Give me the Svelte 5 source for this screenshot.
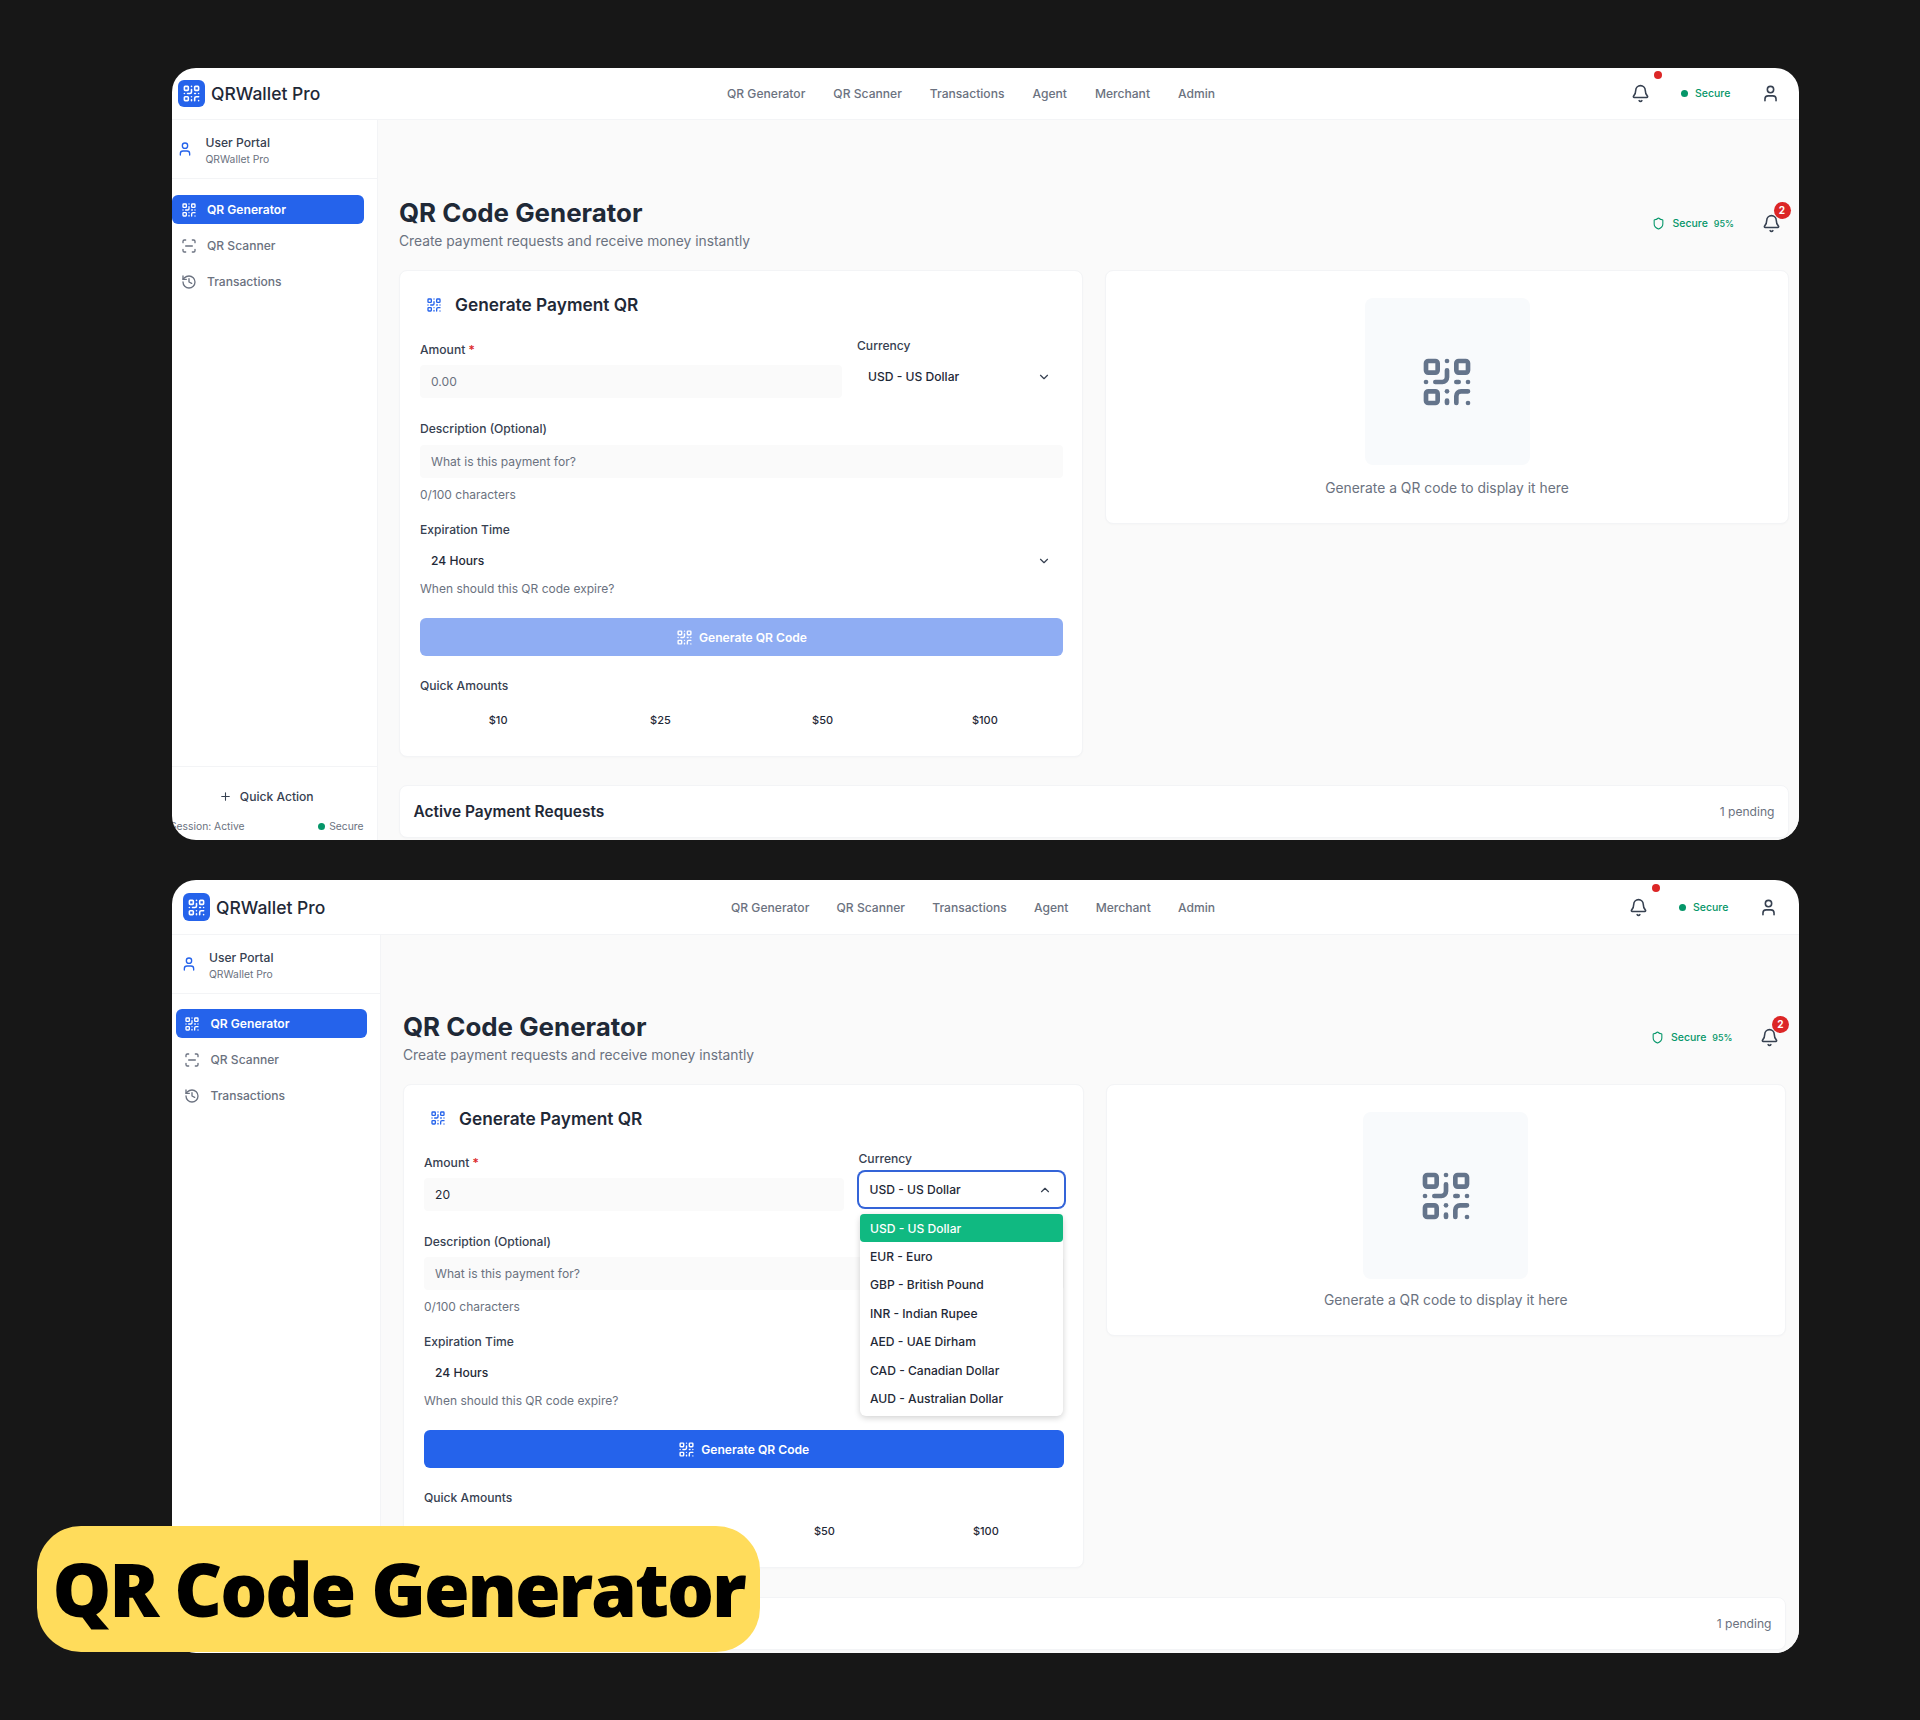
<script>
	const navLinks = ['QR Generator', 'QR Scanner', 'Transactions', 'Agent', 'Merchant', 'Admin'];
	const currencies = [
		'USD - US Dollar',
		'EUR - Euro',
		'GBP - British Pound',
		'INR - Indian Rupee',
		'AED - UAE Dirham',
		'CAD - Canadian Dollar',
		'AUD - Australian Dollar'
	];
	const quickAmounts = ['$10', '$25', '$50', '$100'];
</script>

{#snippet qr(size)}
	<svg class="ic" width={size} height={size} viewBox="0 0 24 24">
		<rect width="5" height="5" x="3" y="3" rx="1" />
		<rect width="5" height="5" x="16" y="3" rx="1" />
		<rect width="5" height="5" x="3" y="16" rx="1" />
		<path d="M21 16h-3a2 2 0 0 0-2 2v3" />
		<path d="M21 21v.01" />
		<path d="M12 7v3a2 2 0 0 1-2 2H7" />
		<path d="M3 12h.01" />
		<path d="M12 3h.01" />
		<path d="M12 16v.01" />
		<path d="M16 12h1" />
		<path d="M21 12v.01" />
		<path d="M12 21v-1" />
	</svg>
{/snippet}

{#snippet bell(size)}
	<svg class="ic" width={size} height={size} viewBox="0 0 24 24">
		<path d="M10.268 21a2 2 0 0 0 3.464 0" />
		<path d="M3.262 15.326A1 1 0 0 0 4 17h16a1 1 0 0 0 .74-1.673C19.41 13.956 18 12.499 18 8A6 6 0 0 0 6 8c0 4.499-1.411 5.956-2.738 7.326" />
	</svg>
{/snippet}

{#snippet user(size)}
	<svg class="ic" width={size} height={size} viewBox="0 0 24 24">
		<path d="M19 21v-2a4 4 0 0 0-4-4H9a4 4 0 0 0-4 4v2" />
		<circle cx="12" cy="7" r="4" />
	</svg>
{/snippet}

{#snippet chevron(up)}
	<svg class="ic chev" width="14" height="14" viewBox="0 0 24 24">
		<path d={up ? 'm18 15-6-6-6 6' : 'm6 9 6 6 6-6'} />
	</svg>
{/snippet}

{#snippet screen(open)}
	<div class="screen" class:s1={!open} class:s2={open}>
		<header class="topbar">
			<div class="brand">
				<span class="logo">{@render qr(19)}</span>
				<span class="brand-name">QRWallet Pro</span>
			</div>
			<nav class="topnav">
				{#each navLinks as link}
					<span>{link}</span>
				{/each}
			</nav>
			<div class="top-right">
				<span class="bell">
					{@render bell(19)}
					<i class="red-dot"></i>
				</span>
				<span class="secure"><i class="dot"></i>Secure</span>
				{@render user(19)}
			</div>
		</header>

		<div class="body">
			<aside class="sidebar">
				<div class="portal">
					<span class="portal-ic">{@render user(16)}</span>
					<div>
						<div class="portal-name">User Portal</div>
						<div class="portal-sub">QRWallet Pro</div>
					</div>
				</div>
				<div class="side-nav">
					<div class="side-item active">{@render qr(16)}QR Generator</div>
					<div class="side-item">
						<svg class="ic" width="16" height="16" viewBox="0 0 24 24">
							<path d="M3 7V5a2 2 0 0 1 2-2h2" />
							<path d="M17 3h2a2 2 0 0 1 2 2v2" />
							<path d="M21 17v2a2 2 0 0 1-2 2h-2" />
							<path d="M7 21H5a2 2 0 0 1-2-2v-2" />
							<path d="M7 12h10" />
						</svg>
						QR Scanner
					</div>
					<div class="side-item">
						<svg class="ic" width="16" height="16" viewBox="0 0 24 24">
							<path d="M3 12a9 9 0 1 0 9-9 9.75 9.75 0 0 0-6.74 2.74L3 8" />
							<path d="M3 3v5h5" />
							<path d="M12 7v5l4 2" />
						</svg>
						Transactions
					</div>
				</div>
				<div class="side-foot">
					<div class="quick-action">
						<svg class="ic" width="13" height="13" viewBox="0 0 24 24">
							<path d="M5 12h14" />
							<path d="M12 5v14" />
						</svg>
						Quick Action
					</div>
					<div class="session">
						<span class="sess-label">Session: Active</span>
						<span class="sess-secure"><i class="dot"></i>Secure</span>
					</div>
				</div>
			</aside>

			<main class="main">
				<div class="page-head">
					<div>
						<h1>QR Code Generator</h1>
						<p>Create payment requests and receive money instantly</p>
					</div>
					<div class="page-status">
						<span class="shield">
							<svg class="ic" width="13" height="13" viewBox="0 0 24 24">
								<path d="M20 13c0 5-3.5 7.5-7.66 8.95a1 1 0 0 1-.67-.01C7.5 20.5 4 18 4 13V6a1 1 0 0 1 1-1c2 0 4.5-1.2 6.24-2.72a1.17 1.17 0 0 1 1.52 0C14.51 3.81 17 5 19 5a1 1 0 0 1 1 1z" />
							</svg>
							<span>Secure</span>
							<span class="pct">95%</span>
						</span>
						<span class="bell page-bell">
							{@render bell(19)}
							<b class="badge">2</b>
						</span>
					</div>
				</div>

				<div class="columns">
					<section class="card form-card">
						<h2>
							<span class="h2-ic">{@render qr(16)}</span>
							Generate Payment QR
						</h2>
						<div class="row">
							<div class="amount-col">
								<div class="label">Amount <em>*</em></div>
								<div class="input" class:filled={open}>{open ? '20' : '0.00'}</div>
							</div>
							<div class="currency-col">
								<div class="label">Currency</div>
								<div class="select currency" class:focus={open}>
									USD - US Dollar
									{@render chevron(open)}
								</div>
								{#if open}
									<ul class="dropdown">
										{#each currencies as c, i}
											<li class:picked={i === 0}>{c}</li>
										{/each}
									</ul>
								{/if}
							</div>
						</div>
						<div class="label desc-label">Description (Optional)</div>
						<div class="input desc">What is this payment for?</div>
						<div class="help count">0/100 characters</div>
						<div class="label exp-label">Expiration Time</div>
						<div class="select expiry">
							24 Hours
							{@render chevron(false)}
						</div>
						<div class="help when">When should this QR code expire?</div>
						<div class="generate" class:ready={open}>
							{@render qr(17)}
							Generate QR Code
						</div>
						<div class="label quick-label">Quick Amounts</div>
						<div class="amounts">
							{#each quickAmounts as amount}
								<span>{amount}</span>
							{/each}
						</div>
					</section>

					<section class="card preview-card">
						<div class="placeholder">{@render qr(56)}</div>
						<p>Generate a QR code to display it here</p>
					</section>
				</div>

				<section class="card active-card">
					<h3>Active Payment Requests</h3>
					<span>1 pending</span>
				</section>
			</main>
		</div>
	</div>
{/snippet}

<div class="page">
	{@render screen(false)}
	{@render screen(true)}
	<div class="caption">QR Code Generator</div>
</div>

<style>
	:global(body) {
		margin: 0;
		background: #171717;
	}

	.page {
		position: relative;
		height: 1720px;
		padding: 68px 121px 0 172px;
		box-sizing: border-box;
		display: flex;
		flex-direction: column;
		gap: 40px;
		background: #171717;
		font-family: Inter, 'Liberation Sans', sans-serif;
		color: #1f2937;
		overflow: hidden;
	}

	.caption {
		position: absolute;
		left: 37px;
		top: 1526px;
		width: 723px;
		height: 126px;
		border-radius: 44px;
		background: #ffdc5b;
		color: #000;
		font-family: 'Open Sans', sans-serif;
		font-weight: 800;
		font-size: 74px;
		letter-spacing: -2.15px;
		line-height: 126px;
		text-align: center;
		white-space: nowrap;
	}

	.screen {
		flex: none;
		height: 772px;
		border-radius: 24px;
		overflow: hidden;
		background: #fff;
		display: flex;
		flex-direction: column;
		--sl: 0px;
	}
	.s2 {
		height: 773px;
		--sl: 3.5px;
	}

	.ic {
		fill: none;
		stroke: currentColor;
		stroke-width: 2;
		stroke-linecap: round;
		stroke-linejoin: round;
		flex: none;
		display: block;
	}
	i {
		display: block;
	}

	/* top bar */
	.topbar {
		flex: none;
		height: 52px;
		box-sizing: border-box;
		border-bottom: 1px solid #f3f4f6;
		display: flex;
		align-items: center;
		padding: 0 19px 0 5.5px;
	}
	.s2 .topbar {
		height: 55px;
		padding-left: 10.5px;
		padding-right: 21px;
	}
	.brand {
		display: flex;
		align-items: center;
		gap: 6px;
		width: 142px;
	}
	.logo {
		flex: none;
		width: 27.5px;
		height: 27.5px;
		border-radius: 6px;
		background: #2563eb;
		color: #fff;
		display: flex;
		align-items: center;
		justify-content: center;
	}
	.brand-name {
		font-size: 17.5px;
		font-weight: 500;
		color: #1f2937;
		white-space: nowrap;
	}
	.topnav {
		margin-left: 407.5px;
		display: flex;
		gap: 28px;
		font-size: 12.1px;
		font-weight: 500;
		color: #6b7280;
	}
	.s2 .topnav {
		margin-left: 406.5px;
		gap: 27.2px;
	}
	.top-right {
		margin-left: auto;
		display: flex;
		align-items: center;
	}
	.bell {
		display: block;
		position: relative;
		color: #374151;
	}
	.red-dot {
		position: absolute;
		right: -12.5px;
		top: -13.5px;
		width: 8px;
		height: 8px;
		border-radius: 50%;
		background: #dc2626;
	}
	.secure {
		margin-left: 31.5px;
		width: 68px;
		display: flex;
		align-items: center;
		gap: 7px;
		font-size: 10.5px;
		font-weight: 500;
		color: #059669;
	}
	.dot {
		width: 7px;
		height: 7px;
		border-radius: 50%;
		background: #059669;
		flex: none;
	}
	.top-right > :global(svg) {
		margin-left: 12px;
		color: #374151;
	}

	.body {
		flex: 1;
		display: flex;
		min-height: 0;
	}

	/* sidebar */
	.sidebar {
		flex: none;
		width: 205.5px;
		box-sizing: border-box;
		border-right: 1px solid #f3f4f6;
		display: flex;
		flex-direction: column;
		padding-left: var(--sl);
	}
	.s2 .sidebar {
		width: 209px;
	}
	.portal {
		height: 59px;
		flex: none;
		box-sizing: border-box;
		border-bottom: 1px solid #f3f4f6;
		display: flex;
		align-items: center;
		gap: 12.5px;
		padding-top: 2px;
		margin-left: calc(0px - var(--sl));
		padding-left: calc(5px + var(--sl));
	}
	.portal-ic {
		color: #2563eb;
		margin-top: -2px;
	}
	.portal-name {
		font-size: 12.1px;
		line-height: 16px;
		font-weight: 500;
		color: #374151;
	}
	.portal-sub {
		font-size: 10.3px;
		line-height: 14px;
		color: #6b7280;
		margin-top: 1px;
	}
	.side-nav {
		padding-top: 16px;
		display: flex;
		flex-direction: column;
		gap: 7px;
		width: 191.5px;
	}
	.s2 .side-nav {
		padding-top: 15px;
	}
	.side-item {
		height: 29px;
		box-sizing: border-box;
		display: flex;
		align-items: center;
		gap: 10.5px;
		padding-left: 8.5px;
		border-radius: 6px;
		font-size: 12.1px;
		font-weight: 500;
		color: #6b7280;
	}
	.side-item.active {
		background: #2563eb;
		color: #fff;
		font-weight: 600;
	}
	.side-foot {
		margin-top: auto;
		border-top: 1px solid #f3f4f6;
		margin-left: calc(0px - var(--sl));
		padding: 21px 13px 7px 0;
	}
	.quick-action {
		display: flex;
		align-items: center;
		justify-content: center;
		gap: 8px;
		height: 16px;
		margin-right: 3px;
		font-size: 12.1px;
		font-weight: 500;
		color: #374151;
	}
	.session {
		margin-top: 15px;
		display: flex;
		justify-content: space-between;
		font-size: 10.3px;
		line-height: 14px;
		color: #6b7280;
	}
	.sess-label {
		margin-left: -2px;
	}
	.sess-secure {
		display: flex;
		align-items: center;
		gap: 4px;
	}

	/* main */
	.main {
		flex: 1;
		min-width: 0;
		background: #fafafa;
		box-sizing: border-box;
		padding: 73px 10px 0 21.5px;
	}
	.s2 .main {
		padding: 72px 13px 0 22px;
	}
	.page-head {
		display: flex;
		justify-content: space-between;
		height: 77px;
	}
	h1 {
		margin: 0;
		font-size: 25.9px;
		line-height: 40px;
		font-weight: 700;
		color: #1f2937;
	}
	.page-head p {
		margin: -1px 0 0;
		font-size: 13.8px;
		line-height: 18px;
		color: #6b7280;
	}
	.page-status {
		display: flex;
		align-items: center;
		height: 60px;
	}
	.shield {
		display: flex;
		align-items: center;
		gap: 7px;
		font-size: 10.5px;
		font-weight: 500;
		color: #059669;
		margin-right: 27.5px;
	}
	.pct {
		font-size: 9px;
		margin-left: -1px;
	}
	.badge {
		position: absolute;
		left: 12px;
		top: -12px;
		width: 17px;
		height: 17px;
		border-radius: 50%;
		background: #dc2626;
		color: #fff;
		font-size: 10px;
		line-height: 17px;
		font-weight: 700;
		text-align: center;
	}
	.page-bell {
		margin-right: 8.5px;
	}
	.s2 .page-bell {
		margin-right: 7px;
	}

	.columns {
		display: grid;
		grid-template-columns: 1fr 1fr;
		gap: 22px;
		align-items: start;
	}
	.card {
		background: #fff;
		border: 1px solid #f3f4f6;
		border-radius: 8px;
		box-sizing: border-box;
		box-shadow: 0 1px 2px rgba(0, 0, 0, 0.02);
	}

	/* payment form */
	.form-card {
		padding: 0 19px 20px 20px;
	}
	h2 {
		margin: 0;
		height: 70px;
		display: flex;
		align-items: center;
		font-size: 17.3px;
		font-weight: 600;
		color: #1f2937;
		position: relative;
		top: -1.5px;
	}
	.s2 h2 {
		top: -2px;
	}
	.h2-ic {
		color: #2563eb;
		margin-left: 5.5px;
		margin-right: 13.5px;
	}
	.row {
		display: grid;
		grid-template-columns: 1fr 206px;
		gap: 15px;
		height: 57px;
	}
	.s2 .row {
		grid-template-columns: 1fr 205px;
	}
	.amount-col {
		display: flex;
		flex-direction: column;
	}
	.s1 .amount-col {
		padding-top: 1px;
	}
	.currency-col {
		position: relative;
		margin-top: -4px;
	}
	.s1 .currency-col {
		margin-top: -3px;
	}
	.label {
		font-size: 12.1px;
		line-height: 16px;
		font-weight: 500;
		color: #374151;
	}
	.label em {
		font-style: normal;
		color: #dc2626;
	}
	.input {
		height: 33px;
		margin-top: 7px;
		flex: none;
		box-sizing: border-box;
		padding-left: 11px;
		display: flex;
		align-items: center;
		border-radius: 4px;
		background: #fafafa;
		font-size: 12.1px;
		color: #6b7280;
	}
	.input.filled {
		color: #1f2937;
	}
	.select {
		position: relative;
		height: 35px;
		box-sizing: border-box;
		display: flex;
		align-items: center;
		justify-content: space-between;
		padding: 0 12px 0 11px;
		border-radius: 6px;
		font-size: 12.1px;
		font-weight: 500;
		color: #1f2937;
	}
	.currency {
		margin-top: 5px;
	}
	.focus {
		box-shadow: 0 0 0 2px #3464d8;
	}
	.chev {
		color: #374151;
	}
	.dropdown {
		position: absolute;
		z-index: 3;
		left: 1px;
		right: 1px;
		top: 63px;
		margin: 0;
		padding: 0 0 3px;
		list-style: none;
		background: #fff;
		border-radius: 6px;
		box-shadow: 0 2px 6px rgba(0, 0, 0, 0.18);
	}
	.dropdown li {
		height: 28.4px;
		padding-left: 10.5px;
		display: flex;
		align-items: center;
		font-size: 12.1px;
		font-weight: 500;
		color: #1f2937;
	}
	.dropdown .picked {
		background: #10b981;
		color: #fff;
		border-radius: 4px;
	}
	.desc-label {
		margin-top: 23px;
	}
	.s2 .desc-label {
		margin-top: 22px;
	}
	.desc {
		margin-top: 8px;
	}
	.s2 .desc {
		margin-top: 7px;
	}
	.help {
		font-size: 12px;
		line-height: 16px;
		color: #6b7280;
	}
	.count {
		margin-top: 9px;
	}
	.exp-label {
		margin-top: 19px;
	}
	.expiry {
		margin-top: 5px;
	}
	.when {
		margin-top: 3px;
	}
	.generate {
		margin-top: 21px;
		height: 38px;
		border-radius: 6px;
		background: #8fadf3;
		color: #fff;
		display: flex;
		align-items: center;
		justify-content: center;
		gap: 6px;
		font-size: 12.1px;
		font-weight: 600;
	}
	.generate.ready {
		background: #2563eb;
	}
	.quick-label {
		margin-top: 22px;
	}
	.amounts {
		margin-top: 10px;
		display: grid;
		grid-template-columns: repeat(4, 1fr);
		gap: 6px;
	}
	.s2 .amounts {
		margin-top: 9px;
	}
	.amounts span {
		height: 32px;
		display: flex;
		align-items: center;
		justify-content: center;
		font-size: 11px;
		font-weight: 500;
		color: #1f2937;
	}

	/* preview */
	.preview-card {
		height: 254px;
		padding-top: 27px;
		display: flex;
		flex-direction: column;
		align-items: center;
	}
	.s2 .preview-card {
		height: 252px;
	}
	.placeholder {
		width: 165px;
		height: 167px;
		border-radius: 8px;
		background: #f8fafc;
		color: #64748b;
		display: flex;
		align-items: center;
		justify-content: center;
	}
	.preview-card p {
		margin: 14px 0 0;
		font-size: 13.85px;
		line-height: 18px;
		color: #6b7280;
	}
	.s2 .preview-card p {
		margin-top: 12px;
	}

	/* active requests */
	.active-card {
		margin-top: 28px;
		height: 53px;
		display: flex;
		align-items: center;
		justify-content: space-between;
		padding: 0 13.5px;
	}
	.s2 .active-card {
		margin-top: 29px;
	}
	h3 {
		margin: 0;
		font-size: 15.5px;
		font-weight: 600;
		color: #1f2937;
	}
	.active-card span {
		font-size: 12.1px;
		color: #6b7280;
	}
</style>
